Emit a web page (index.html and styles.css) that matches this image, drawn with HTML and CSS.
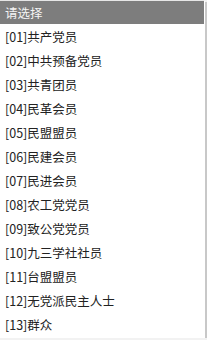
FILE: index.html
```html
<!DOCTYPE html>
<html lang="zh-CN">
<head>
    <meta charset="UTF-8">
    <meta name="viewport" content="width=device-width, initial-scale=1.0">
    <title>请选择</title>
    <link rel="stylesheet" href="styles.css">
</head>
<body>
    <div class="dropdown">
        <div class="dropdown-head">请选择</div>
        <ul class="option-list">
            <li>[01]共产党员</li>
            <li>[02]中共预备党员</li>
            <li>[03]共青团员</li>
            <li>[04]民革会员</li>
            <li>[05]民盟盟员</li>
            <li>[06]民建会员</li>
            <li>[07]民进会员</li>
            <li>[08]农工党党员</li>
            <li>[09]致公党党员</li>
            <li>[10]九三学社社员</li>
            <li>[11]台盟盟员</li>
            <li>[12]无党派民主人士</li>
            <li>[13]群众</li>
        </ul>
    </div>
</body>
</html>
```

FILE: styles.css
```css
body {
    margin: 0;
    padding: 0;
    background: #f2f2f2;
    font-family: "Microsoft YaHei", "Noto Sans CJK SC", sans-serif;
}

.dropdown {
    width: 204px;
    background: #fff;
    border-top: 1px solid #e6e6e6;
    border-right: 1px solid #fff;
    border-bottom: 1px solid #fff;
    box-shadow: 2px 2px 0 #c8c8c8;
}

.dropdown-head {
    height: 23px;
    line-height: 23px;
    padding-left: 5px;
    background: #7d7d7d;
    color: #f4f4f4;
    font-size: 12.5px;
}

.option-list {
    list-style: none;
    margin: 0;
    padding: 1px 0 0;
}

.option-list li {
    height: 24px;
    line-height: 24px;
    padding-left: 5px;
    color: #222;
    font-size: 12.5px;
}
```
